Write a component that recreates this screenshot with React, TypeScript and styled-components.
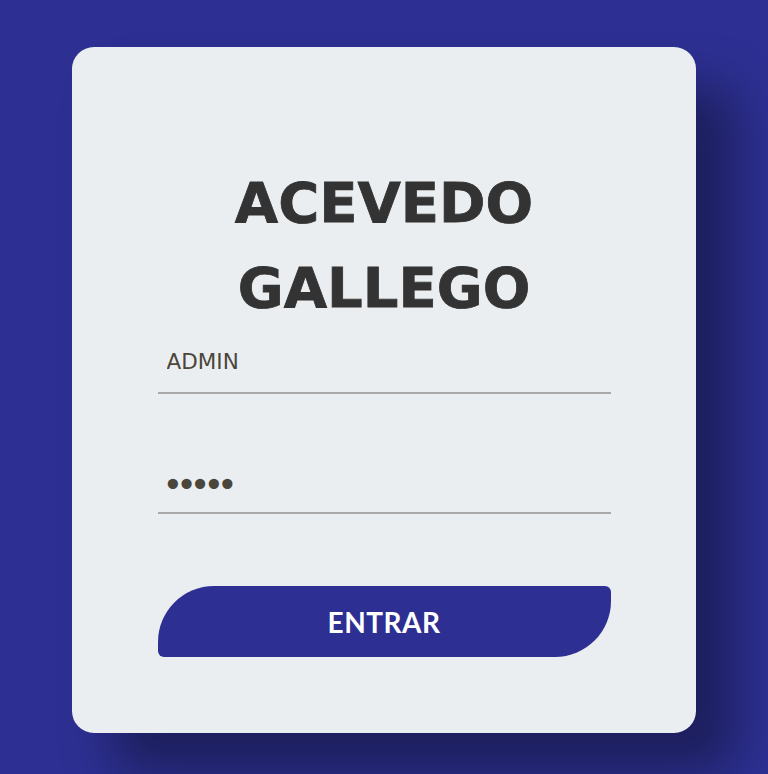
import React from "react";
import styled, { createGlobalStyle } from "styled-components";

const GlobalStyle = createGlobalStyle`
  html, body {
    margin: 0;
    padding: 0;
    background: #2d3092;
  }
  body {
    font-family: "DejaVu Sans", sans-serif;
  }
  * { box-sizing: border-box; }
`;

const Page = styled.main`
  min-height: 774px;
  padding-top: 47px;
  display: flex;
  justify-content: center;
  align-items: flex-start;
  overflow: hidden;
`;

const Card = styled.section`
  width: 624px;
  height: 686px;
  background: #ebeef1;
  border-radius: 22px;
  box-shadow: 40px 40px 50px rgba(0, 0, 0, 0.36);
  padding: 113px 0 0;
  display: flex;
  flex-direction: column;
  align-items: center;
`;

const Title = styled.h1`
  margin: 0;
  font-family: "DejaVu Sans", sans-serif;
  font-weight: 700;
  font-size: 56px;
  line-height: 85px;
  color: #333333;
  -webkit-text-stroke: 0.8px #333333;
  text-align: center;
`;

const Form = styled.form`
  width: 453px;
  display: flex;
  flex-direction: column;
`;

const Field = styled.input<{ $secret?: boolean }>`
  display: block;
  width: 100%;
  height: 64px;
  margin: ${(p) => (p.$secret ? "56px 0 0" : "0")};
  padding: ${(p) => (p.$secret ? "8px 0 0 5px" : "0 9px")};
  border: none;
  border-bottom: 2px solid #a8a8a8;
  background: transparent;
  outline: none;
  font-family: "DejaVu Sans", sans-serif;
  font-size: ${(p) => (p.$secret ? "35px" : "21.5px")};
  letter-spacing: ${(p) => (p.$secret ? "-7px" : "0")};
  color: #4a463b;
`;

const Submit = styled.button`
  margin-top: 72px;
  height: 71px;
  width: 100%;
  border: none;
  border-radius: 56px 6px 56px 6px;
  background: #2d3092;
  color: #ffffff;
  font-family: Lato, "Open Sans", sans-serif;
  font-weight: 700;
  font-size: 28px;
  letter-spacing: 0.5px;
  cursor: pointer;
`;

export default function App() {
  return (
    <>
      <GlobalStyle />
      <Page>
        <Card>
          <Title>
            ACEVEDO
            <br />
            GALLEGO
          </Title>
          <Form onSubmit={(e) => e.preventDefault()}>
            <Field type="text" defaultValue="ADMIN" aria-label="Usuario" />
            <Field $secret type="password" defaultValue="12345" aria-label="Contraseña" />
            <Submit type="submit">ENTRAR</Submit>
          </Form>
        </Card>
      </Page>
    </>
  );
}
